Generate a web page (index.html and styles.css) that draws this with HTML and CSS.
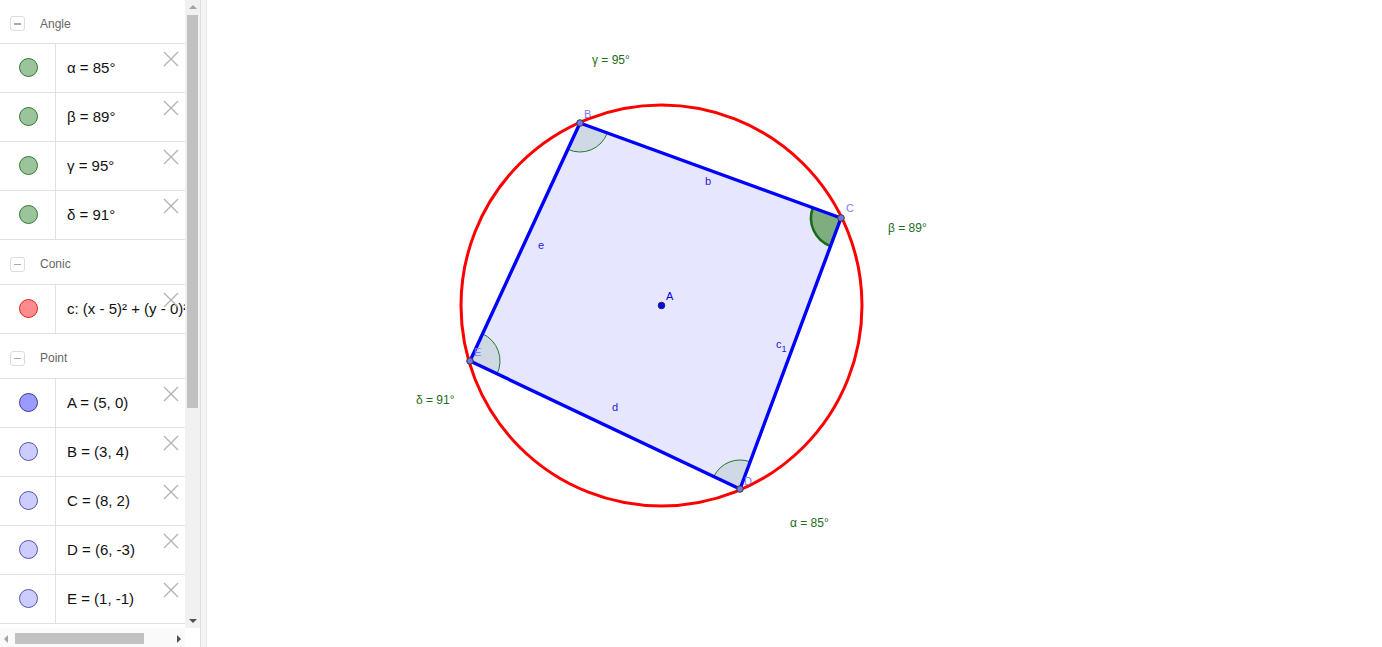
FILE: index.html
```html
<!DOCTYPE html>
<html>
<head>
<meta charset="utf-8">
<link rel="stylesheet" href="styles.css">
</head>
<body>
<div class="app">
  <div class="sidebar">
    <div class="list">
      <div class="group-header first"><span class="toggle"></span><span class="group-title">Angle</span></div>
      <div class="item"><div class="marker-cell"><span class="marker m-angle"></span></div><div class="item-text">α = 85°</div><svg class="close" viewBox="0 0 16 16"><path d="M1 1L15 15M15 1L1 15"/></svg></div>
      <div class="item"><div class="marker-cell"><span class="marker m-angle"></span></div><div class="item-text">β = 89°</div><svg class="close" viewBox="0 0 16 16"><path d="M1 1L15 15M15 1L1 15"/></svg></div>
      <div class="item"><div class="marker-cell"><span class="marker m-angle"></span></div><div class="item-text">γ = 95°</div><svg class="close" viewBox="0 0 16 16"><path d="M1 1L15 15M15 1L1 15"/></svg></div>
      <div class="item"><div class="marker-cell"><span class="marker m-angle"></span></div><div class="item-text">δ = 91°</div><svg class="close" viewBox="0 0 16 16"><path d="M1 1L15 15M15 1L1 15"/></svg></div>
      <div class="group-header"><span class="toggle"></span><span class="group-title">Conic</span></div>
      <div class="item"><div class="marker-cell"><span class="marker m-conic"></span></div><div class="item-text">c: (x - 5)² + (y - 0)² = 20</div><svg class="close" viewBox="0 0 16 16"><path d="M1 1L15 15M15 1L1 15"/></svg></div>
      <div class="group-header"><span class="toggle"></span><span class="group-title">Point</span></div>
      <div class="item"><div class="marker-cell"><span class="marker m-free"></span></div><div class="item-text">A = (5, 0)</div><svg class="close" viewBox="0 0 16 16"><path d="M1 1L15 15M15 1L1 15"/></svg></div>
      <div class="item"><div class="marker-cell"><span class="marker m-point"></span></div><div class="item-text">B = (3, 4)</div><svg class="close" viewBox="0 0 16 16"><path d="M1 1L15 15M15 1L1 15"/></svg></div>
      <div class="item"><div class="marker-cell"><span class="marker m-point"></span></div><div class="item-text">C = (8, 2)</div><svg class="close" viewBox="0 0 16 16"><path d="M1 1L15 15M15 1L1 15"/></svg></div>
      <div class="item"><div class="marker-cell"><span class="marker m-point"></span></div><div class="item-text">D = (6, -3)</div><svg class="close" viewBox="0 0 16 16"><path d="M1 1L15 15M15 1L1 15"/></svg></div>
      <div class="item"><div class="marker-cell"><span class="marker m-point"></span></div><div class="item-text">E = (1, -1)</div><svg class="close" viewBox="0 0 16 16"><path d="M1 1L15 15M15 1L1 15"/></svg></div>
    </div>
    <div class="vscroll">
      <span class="arrow-up"></span>
      <span class="vthumb"></span>
      <span class="arrow-down"></span>
    </div>
    <div class="hscroll">
      <span class="arrow-left"></span>
      <span class="hthumb"></span>
      <span class="arrow-right"></span>
    </div>
    <div class="corner"></div>
  </div>
  <div class="divider"></div>
  <div class="canvas">
    <svg class="plot" viewBox="207 0 1175 647" width="1175" height="647">
      <polygon points="580,123 841,218 740,489 470,361" fill="#e6e6ff"/>
      <path d="M580,123 L607.3,132.9 A29,29 0 0 1 567.8,149.3 Z" fill="#cfd9e6"/>
      <path d="M607.3,132.9 A29,29 0 0 1 567.8,149.3" fill="none" stroke="#1f7a1f" stroke-width="1"/>
      <path d="M841,218 L830.5,246.1 A30,30 0 0 1 812.8,207.7 Z" fill="#7fad80"/>
      <path d="M830.5,246.1 A30,30 0 0 1 812.8,207.7" fill="none" stroke="#1b6b1b" stroke-width="2.6"/>
      <path d="M740,489 L713.8,476.6 A29,29 0 0 1 750.1,461.8 Z" fill="#cfd9e6"/>
      <path d="M713.8,476.6 A29,29 0 0 1 750.1,461.8" fill="none" stroke="#1f7a1f" stroke-width="1"/>
      <path d="M470,361 L482.6,333.8 A30,30 0 0 1 497.1,373.9 Z" fill="#cfd9e6"/>
      <path d="M482.6,333.8 A30,30 0 0 1 497.1,373.9" fill="none" stroke="#1f7a1f" stroke-width="1"/>
      <polygon points="580,123 841,218 740,489 470,361" fill="none" stroke="#0000ff" stroke-width="3.4" stroke-linejoin="round"/>
      <circle cx="661.5" cy="305.5" r="200.5" fill="none" stroke="#ff0000" stroke-width="3"/>
      <circle cx="580" cy="123" r="3.3" fill="#7474e4" stroke="#3a3a3a" stroke-width="1"/>
      <circle cx="841" cy="218" r="3.3" fill="#7474e4" stroke="#3a3a3a" stroke-width="1"/>
      <circle cx="740" cy="489" r="3.3" fill="#7474e4" stroke="#3a3a3a" stroke-width="1"/>
      <circle cx="470" cy="361" r="3.3" fill="#7474e4" stroke="#3a3a3a" stroke-width="1"/>
      <circle cx="661.5" cy="305.5" r="3.3" fill="#0000ff" stroke="#2a2a55" stroke-width="1"/>
      <g class="plabel">
        <text x="584" y="118">B</text>
        <text x="846" y="212">C</text>
        <text x="744" y="485">D</text>
        <text x="474" y="356">E</text>
      </g>
      <text class="alabel" x="666" y="300">A</text>
      <g class="slabel">
        <text x="705" y="185">b</text>
        <text x="538" y="249">e</text>
        <text x="612" y="411">d</text>
        <text x="776" y="348">c<tspan class="sub" dy="4">1</tspan></text>
      </g>
      <g class="anglabel">
        <text x="592" y="64">γ = 95°</text>
        <text x="888" y="232">β = 89°</text>
        <text x="416" y="404">δ = 91°</text>
        <text x="790" y="527">α = 85°</text>
      </g>
    </svg>
  </div>
</div>
</body>
</html>
```

FILE: styles.css
```css
html, body {
  margin: 0;
  padding: 0;
  background: #fff;
  overflow: hidden;
  font-family: "Liberation Sans", Arial, sans-serif;
}

.app {
  display: flex;
  width: 1382px;
  height: 647px;
}

.sidebar {
  width: 200px;
  flex: none;
  display: grid;
  grid-template-columns: 185px 15px;
  grid-template-rows: 628px 19px;
}

.list {
  overflow: hidden;
}

.group-header {
  height: 45px;
  box-sizing: border-box;
  padding-top: 3px;
  border-top: 1px solid #fff;
  border-bottom: 1px solid #e1e1e1;
  display: flex;
  align-items: center;
}

.group-header.first {
  height: 44px;
  padding-top: 4px;
  border-top: 0;
}

.toggle {
  width: 13px;
  height: 13px;
  margin-left: 10px;
  border: 1px solid #dcdcdc;
  border-radius: 3px;
  position: relative;
}

.toggle::after {
  content: "";
  position: absolute;
  left: 3px;
  top: 6px;
  width: 7px;
  height: 1.5px;
  background: #a8a8a8;
}

.group-title {
  margin-left: 15px;
  font-size: 12px;
  color: #666;
}

.item {
  height: 48px;
  border-bottom: 1px solid #e1e1e1;
  display: flex;
  position: relative;
}

.marker-cell {
  width: 56px;
  flex: none;
  border-right: 1px solid #e1e1e1;
  display: flex;
  align-items: center;
  justify-content: center;
  padding-bottom: 2px;
  box-sizing: border-box;
}

.marker {
  width: 17px;
  height: 17px;
  border-radius: 50%;
  border: 1px solid;
  margin-left: 1px;
}

.m-angle { background: #9cc49c; border-color: #2f7a2f; }
.m-conic { background: #ff8c8c; border-color: #e52020; }
.m-free { background: #9a9aff; border-color: #3c3c8c; }
.m-point { background: #ccccff; border-color: #5555a8; }

.item-text {
  padding-left: 11px;
  padding-bottom: 2px;
  display: flex;
  align-items: center;
  font-size: 15px;
  color: #111;
  white-space: nowrap;
  overflow: hidden;
}

.close {
  position: absolute;
  right: 6px;
  top: 7px;
  width: 16px;
  height: 16px;
  fill: none;
  stroke: #b4b4b4;
  stroke-width: 1.4;
}

.vscroll {
  background: #f1f1f1;
  display: flex;
  flex-direction: column;
  align-items: center;
}

.arrow-up {
  margin-top: 5px;
  width: 0;
  height: 0;
  border-left: 4px solid transparent;
  border-right: 4px solid transparent;
  border-bottom: 4px solid #a3a3a3;
}

.vthumb {
  margin-top: 6px;
  width: 11px;
  height: 393px;
  background: #c1c1c1;
}

.arrow-down {
  margin-top: auto;
  margin-bottom: 5px;
  width: 0;
  height: 0;
  border-left: 4px solid transparent;
  border-right: 4px solid transparent;
  border-top: 4px solid #505050;
}

.hscroll {
  background: #fafafa;
  display: flex;
  align-items: center;
  padding-top: 2px;
  box-sizing: border-box;
}

.arrow-left {
  margin-left: 4px;
  width: 0;
  height: 0;
  border-top: 4px solid transparent;
  border-bottom: 4px solid transparent;
  border-right: 4px solid #a3a3a3;
}

.hthumb {
  margin-left: 7px;
  width: 129px;
  height: 11px;
  background: #c1c1c1;
}

.arrow-right {
  margin-left: auto;
  margin-right: 4px;
  width: 0;
  height: 0;
  border-top: 4px solid transparent;
  border-bottom: 4px solid transparent;
  border-left: 4px solid #505050;
}

.corner {
  background: #fff;
}

.divider {
  width: 7px;
  flex: none;
  box-sizing: border-box;
  background: #f4f4f4;
  border-left: 1px solid #dedede;
  border-right: 1px solid #e8e8e8;
}

.canvas {
  flex: 1;
  overflow: hidden;
}

.plot {
  display: block;
}

.plot text {
  font-family: "Liberation Sans", Arial, sans-serif;
}

.plabel text {
  font-size: 11px;
  fill: #7b7bf2;
}

.alabel {
  font-size: 11px;
  fill: #0000dd;
}

.slabel text {
  font-size: 11px;
  fill: #1c1cd8;
}

.slabel .sub {
  font-size: 9px;
}

.anglabel text {
  font-size: 12px;
  fill: #1e6b1e;
}
```
